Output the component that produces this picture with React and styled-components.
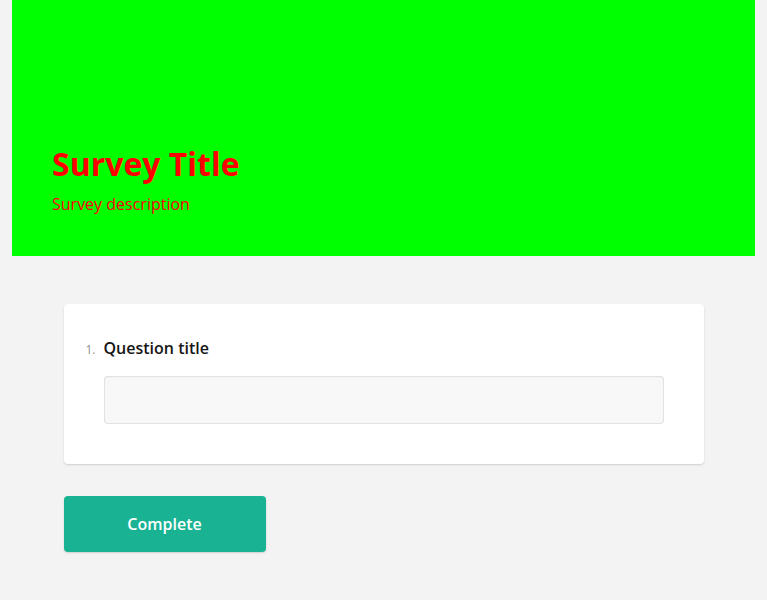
import React from 'react';
import styled, {createGlobalStyle} from 'styled-components';

// ========== Global ========== //
const GlobalStyle = createGlobalStyle`
	html, body {
		margin: 0;
		padding: 0;
		background-color: #f3f3f3;
		font-family: "Open Sans", "Noto Sans", sans-serif;
	}
	* {
		box-sizing: border-box;
	}
`;

// ========== Styled Components ========== //
const Page = styled.div`
	min-height: 600px;
	padding: 0 12px 48px;
	background-color: #f3f3f3;
`;

const Header = styled.header`
	height: 256px;
	display: flex;
	flex-direction: column;
	justify-content: flex-end;
	padding: 0 40px 40px;
	background-color: #00ff00;
`;

const Title = styled.h1`
	margin: 0;
	font-size: 32px;
	line-height: 40px;
	font-weight: 700;
	color: #ff0000;
`;

const Description = styled.p`
	margin: 8px 0 0;
	font-size: 16px;
	line-height: 24px;
	font-weight: 400;
	color: #ff0000;
`;

const Body = styled.main`
	width: 640px;
	margin: 48px auto 0;
`;

const Card = styled.section`
	background-color: #fff;
	border-radius: 4px;
	box-shadow: 0 1px 2px rgba(0, 0, 0, 0.15);
	padding: 32px 40px 40px 22px;
`;

const QuestionHeader = styled.div`
	display: flex;
	align-items: baseline;
	height: 24px;
`;

const Number = styled.span`
	width: 18px;
	flex-shrink: 0;
	font-size: 12px;
	line-height: 24px;
	color: #8f8f8f;
`;

const QuestionTitle = styled.h5`
	margin: 0;
	font-size: 16px;
	line-height: 24px;
	font-weight: 600;
	color: #161616;
`;

const Answer = styled.div`
	margin: 16px 0 0 18px;
`;

const TextInput = styled.input`
	display: block;
	width: 100%;
	height: 48px;
	padding: 0 16px;
	border: none;
	border-radius: 4px;
	background-color: #f8f8f8;
	box-shadow: inset 0 0 0 1px #e2e2e2, inset 0 1px 2px rgba(0, 0, 0, 0.08);
	font-family: inherit;
	font-size: 16px;
	outline: none;
`;

const Footer = styled.div`
	display: flex;
	margin-top: 32px;
`;

const CompleteButton = styled.button`
	width: 202px;
	height: 56px;
	border: none;
	border-radius: 4px;
	background-color: #19b394;
	box-shadow: 0 1px 2px rgba(0, 0, 0, 0.15);
	color: #fff;
	font-family: inherit;
	font-size: 16px;
	font-weight: 600;
	cursor: pointer;
`;

// ========== React Function Component ========== //
const App = () => {
	return (
		<Page>
			<GlobalStyle/>

			<Header>
				<Title>Survey Title</Title>
				<Description>Survey description</Description>
			</Header>

			<Body>
				<Card>
					<QuestionHeader>
						<Number>1.</Number>
						<QuestionTitle>Question title</QuestionTitle>
					</QuestionHeader>

					<Answer>
						<TextInput type="text"/>
					</Answer>
				</Card>

				<Footer>
					<CompleteButton type="button">Complete</CompleteButton>
				</Footer>
			</Body>
		</Page>
	);
}

export default App;
